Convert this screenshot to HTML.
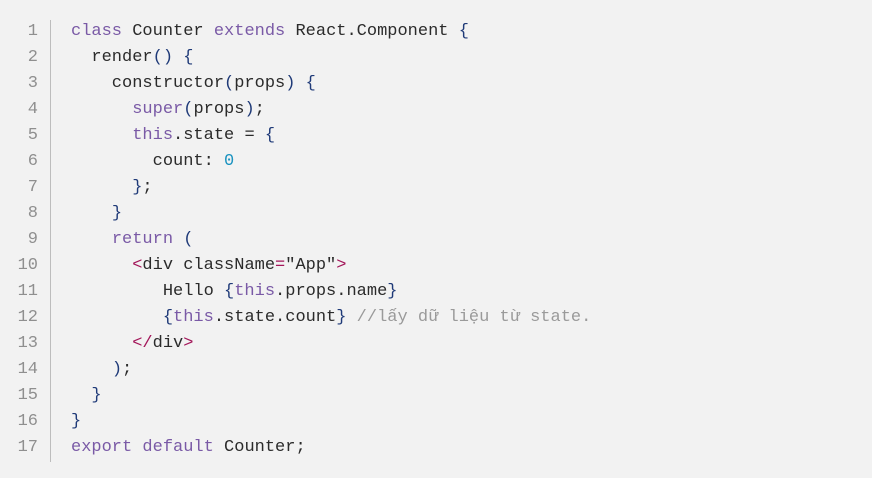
<!DOCTYPE html>
<html><head><style>
html,body{margin:0;padding:0;background:#f2f2f2;width:872px;height:478px;overflow:hidden}
.wrap{position:absolute;left:0;top:19px;font-family:"Liberation Mono",monospace;font-size:17px;line-height:26px;color:#2b2b2b}
.ln{position:absolute;left:0;width:38px;text-align:right;color:#8f8f8f}
.bar{position:absolute;left:50px;top:1px;width:1px;height:442px;background:#bdbdbd}
.code{position:absolute;left:71px;white-space:pre}
.k{color:#7a5aa6}.b{color:#1f3a78}.t{color:#a3175a}.n{color:#1b93c0}.c{color:#9a9a9a}
</style></head><body>
<div class="wrap">
<div class="ln">1<br>2<br>3<br>4<br>5<br>6<br>7<br>8<br>9<br>10<br>11<br>12<br>13<br>14<br>15<br>16<br>17</div>
<div class="bar"></div>
<div class="code"><span class="k">class</span> Counter <span class="k">extends</span> React.Component <span class="b">{</span>
  render<span class="b">()</span> <span class="b">{</span>
    constructor<span class="b">(</span>props<span class="b">)</span> <span class="b">{</span>
      <span class="k">super</span><span class="b">(</span>props<span class="b">)</span>;
      <span class="k">this</span>.state = <span class="b">{</span>
        count: <span class="n">0</span>
      <span class="b">}</span>;
    <span class="b">}</span>
    <span class="k">return</span> <span class="b">(</span>
      <span class="t">&lt;</span>div className<span class="t">=</span>"App"<span class="t">&gt;</span>
         Hello <span class="b">{</span><span class="k">this</span>.props.name<span class="b">}</span>
         <span class="b">{</span><span class="k">this</span>.state.count<span class="b">}</span> <span class="c">//lấy dữ liệu từ state.</span>
      <span class="t">&lt;/</span>div<span class="t">&gt;</span>
    <span class="b">)</span>;
  <span class="b">}</span>
<span class="b">}</span>
<span class="k">export</span> <span class="k">default</span> Counter;</div>
</div>
</body></html>
